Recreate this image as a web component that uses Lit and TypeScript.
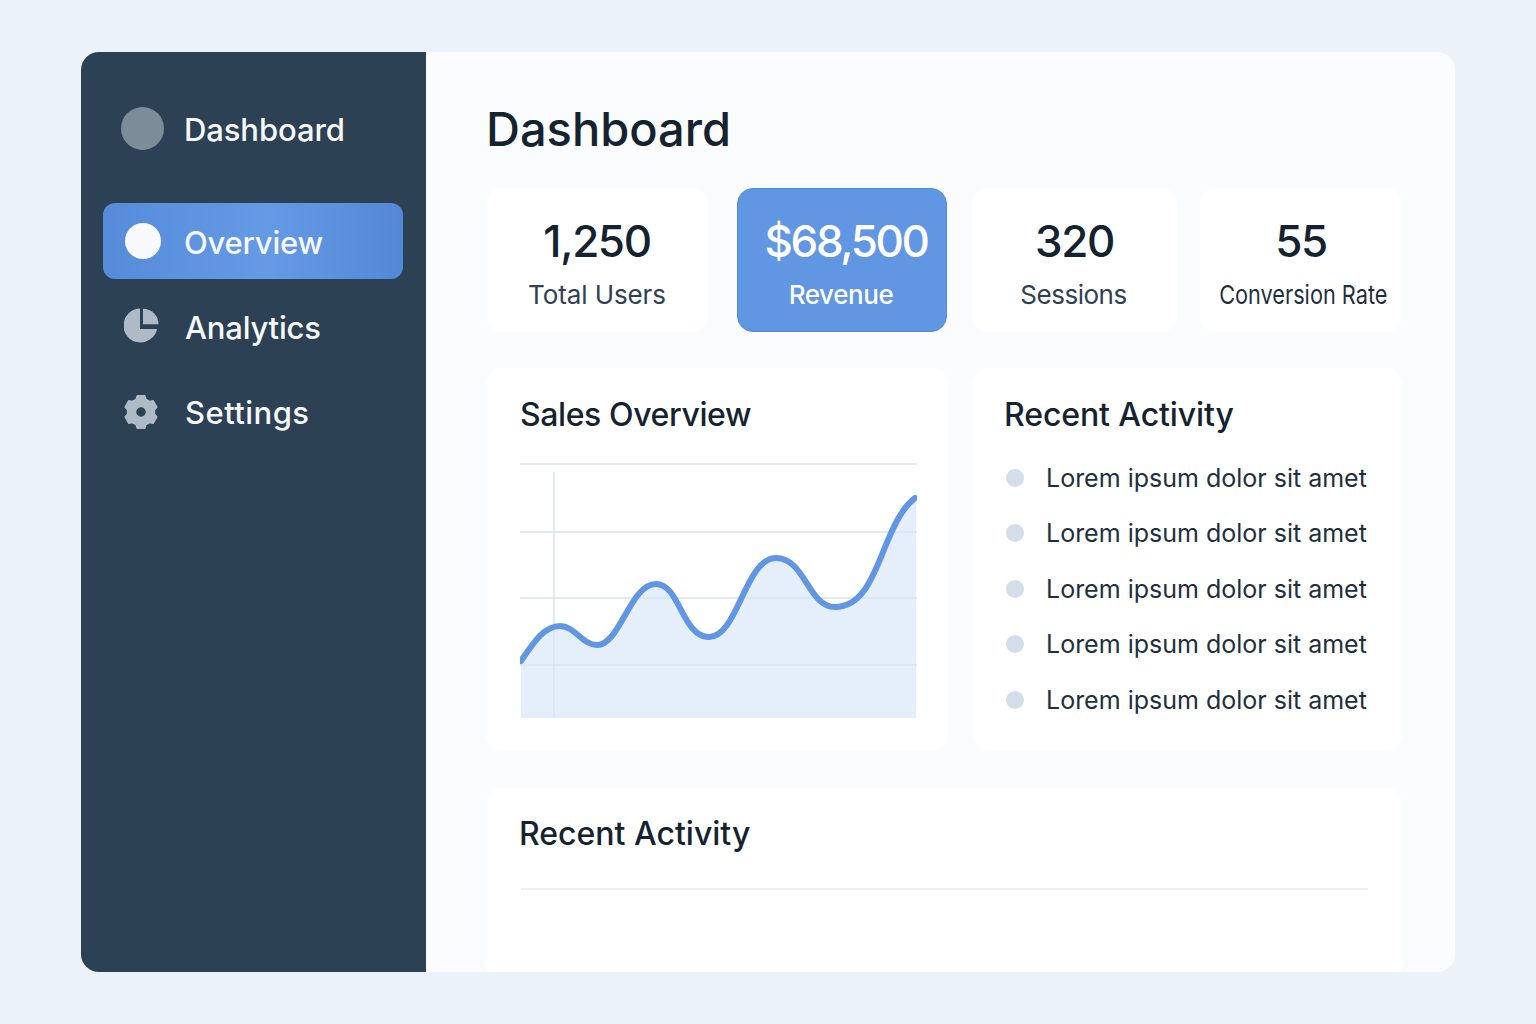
import { LitElement, html, css, svg } from "lit";
import { customElement } from "lit/decorators.js";

const stats = [
  { value: "1,250", label: "Total Users", cls: "a" },
  { value: "$68,500", label: "Revenue", cls: "b hot" },
  { value: "320", label: "Sessions", cls: "c" },
  { value: "55", label: "Conversion Rate", cls: "d" },
];

const curve =
  "M1 201 C15 180 25 166 40 166 C55 166 62 185 77 185 C100 185 110 124 136 124 C160 124 162 177 189 177 C218 177 225 98 256 98 C285 98 288 147 315 147 C360 147 360 65 395 38";

function gearPath(cx: number, cy: number, teeth: number, outer: number, root: number): string {
  const pts: string[] = [];
  const pt = (r: number, deg: number) => {
    const a = (deg * Math.PI) / 180;
    return `${(cx + r * Math.cos(a)).toFixed(2)} ${(cy + r * Math.sin(a)).toFixed(2)}`;
  };
  const step = 360 / teeth;
  for (let i = 0; i < teeth; i++) {
    const c = -90 + i * step;
    pts.push(pt(root, c - 21), pt(outer, c - 13), pt(outer, c + 13), pt(root, c + 21));
  }
  return `M${pts.join(" L")} Z`;
}

const gear = gearPath(17, 18, 6, 16.6, 13.6);

@customElement("app-root")
export class AppRoot extends LitElement {
  static styles = css`
    :host {
      display: block;
      width: 1536px;
      height: 1024px;
      box-sizing: border-box;
      padding: 52px 81px;
      background: #ebf2fa;
      font-family: Inter, "Liberation Sans", sans-serif;
      color: #14232f;
    }
    .shell {
      display: flex;
      height: 920px;
      border-radius: 18px;
      overflow: hidden;
      background: #fbfcfe;
    }
    .side {
      width: 345px;
      flex: none;
      box-sizing: border-box;
      padding: 55px 22px 0;
      background: #2c4154;
      color: #fff;
    }
    .brand {
      display: flex;
      align-items: center;
      gap: 20px;
      padding-left: 18px;
      height: 43px;
      font-size: 31px;
      font-weight: 500;
      letter-spacing: -0.1px;
      color: #f6f8fb;
    }
    .brand span {
      padding-top: 2px;
    }
    .brand i {
      width: 43px;
      height: 43px;
      border-radius: 50%;
      background: #7d8c99;
    }
    nav {
      display: flex;
      flex-direction: column;
      margin-top: 53px;
      gap: 9.25px;
    }
    .item {
      display: flex;
      align-items: center;
      width: 300px;
      height: 76px;
      box-sizing: border-box;
      padding-left: 21px;
      gap: 24px;
      border-radius: 12px;
      font-size: 31px;
      font-weight: 500;
      letter-spacing: -0.2px;
      color: #f6f8fb;
    }
    .item span {
      padding-top: 2px;
    }
    .item svg {
      width: 36px;
      height: 36px;
      flex: none;
      margin-right: 1px;
    }
    .item.settings {
      letter-spacing: 0.45px;
    }
    .item.on {
      padding-left: 22px;
      gap: 23px;
      background: linear-gradient(90deg, #558bd9 0%, #659ae5 55%, #5288d6 100%);
    }
    .item.on i {
      width: 36px;
      height: 36px;
      flex: none;
      border-radius: 50%;
      background: #f7f9fc;
    }
    main {
      flex: 1;
      min-width: 0;
      box-sizing: border-box;
      padding: 50px 53px 0 60px;
      display: flex;
      flex-direction: column;
    }
    h1 {
      margin: 0;
      font-size: 47px;
      line-height: 54px;
      font-weight: 500;
      color: #14232f;
    }
    .stats {
      display: flex;
      margin-top: 32px;
    }
    .stat {
      height: 144px;
      flex: none;
      box-sizing: border-box;
      padding-top: 26px;
      background: #fff;
      border-radius: 16px;
      text-align: center;
    }
    .stat.a {
      width: 222px;
    }
    .stat.b {
      width: 210px;
      margin-left: 29px;
    }
    .stat.c {
      width: 205px;
      margin-left: 25px;
    }
    .stat.d {
      width: 202px;
      margin-left: 23px;
    }
    .stat b {
      display: block;
      font-size: 44px;
      line-height: 54px;
      font-weight: 500;
      letter-spacing: -1.4px;
    }
    .stat span {
      display: block;
      margin-top: 11px;
      font-size: 26px;
      line-height: 32px;
      color: #2e4152;
    }
    .stat.a span {
      letter-spacing: -0.1px;
    }
    .stat.c span {
      letter-spacing: -0.5px;
      padding-right: 2px;
    }
    .stat.d span {
      color: #1e2f3e;
      white-space: nowrap;
      padding-left: 3px;
      transform: scaleX(0.835);
    }
    .stat.hot {
      background: #6096e2;
      color: #fff;
      border: 1px solid #528ad9;
      padding-top: 25px;
    }
    .stat.hot b {
      letter-spacing: -2.4px;
      padding-left: 8px;
    }
    .stat.hot span {
      color: #fff;
      font-weight: 500;
      letter-spacing: -0.4px;
      padding-right: 2px;
    }
    .row {
      display: grid;
      grid-template-columns: 462px 429px;
      justify-content: space-between;
      margin-top: 36px;
    }
    .card {
      background: #fff;
      border-radius: 16px;
      height: 382px;
      box-sizing: border-box;
    }
    .sales {
      padding: 27px 0 0 34px;
    }
    .sales h2 {
      letter-spacing: -0.4px;
    }
    h2 {
      margin: 0;
      font-size: 32px;
      line-height: 40px;
      font-weight: 500;
      color: #14232f;
    }
    .chart {
      display: block;
      width: 397px;
      height: 260px;
      margin-top: 25px;
    }
    .recent {
      padding: 27px 0 0 31px;
    }
    .recent h2 {
      letter-spacing: -0.1px;
    }
    ul {
      list-style: none;
      margin: 26.7px 0 0;
      padding: 0;
      display: flex;
      flex-direction: column;
      gap: 23.5px;
    }
    li {
      display: flex;
      align-items: center;
      gap: 22px;
      font-size: 25px;
      line-height: 32px;
      color: #1e2f3e;
    }
    li i {
      width: 18px;
      height: 18px;
      margin-left: 2px;
      border-radius: 50%;
      background: #d3dee8;
    }
    .bottom {
      flex: 1;
      margin-top: 38px;
      padding: 26px 34px 0 33px;
      background: #fff;
      border-radius: 16px 16px 0 0;
    }
    hr {
      margin: 34px 0 0 2px;
      border: 0;
      height: 2px;
      background: #edf1f5;
    }
  `;

  render() {
    return html`
      <div class="shell">
        <aside class="side">
          <div class="brand"><i></i><span>Dashboard</span></div>
          <nav>
            <div class="item on"><i></i><span>Overview</span></div>
            <div class="item">
              <svg viewBox="0 0 36 36"><path fill="#aebbc6" d="M16 0.500 V21 H33.100 A17 17 0 1 1 16 0.500 Z"/><path fill="#aebbc6" d="M19 0.800 A15.500 15.500 0 0 1 34.500 16.300 H19 Z"/></svg>
              <span>Analytics</span>
            </div>
            <div class="item settings">
              <svg viewBox="0 0 36 36"><path fill="#aebbc6" stroke="#aebbc6" stroke-width="1.500" stroke-linejoin="round" fill-rule="evenodd" d="${gear} M17 12.500 a5.500 5.500 0 1 0 0 11 a5.500 5.500 0 1 0 0 -11 Z"/></svg>
              <span>Settings</span>
            </div>
          </nav>
        </aside>
        <main>
          <h1>Dashboard</h1>
          <section class="stats">
            ${stats.map(
              (s) => html`<div class="stat ${s.cls}"><b>${s.value}</b><span>${s.label}</span></div>`
            )}
          </section>
          <section class="row">
            <div class="card sales">
              <h2>Sales Overview</h2>
              <svg class="chart" viewBox="0 0 397 260">
                ${[4, 72, 138, 205].map(
                  (y) => svg`<line x1="0" x2="397" y1=${y} y2=${y} stroke="#d8e2ed" stroke-width="1.500"/>`
                )}
                <line x1="34" x2="34" y1="12" y2="258" stroke="#dbe3ec" stroke-width="1.500"/>
                <path d="${curve} L396 38 V258 H1 Z" fill="#d5e4f8" fill-opacity="0.62"/>
                <path d=${curve} fill="none" stroke="#6096e2" stroke-width="6" stroke-linecap="round"/>
              </svg>
            </div>
            <div class="card recent">
              <h2>Recent Activity</h2>
              <ul>
                ${[0, 1, 2, 3, 4].map(() => html`<li><i></i>Lorem ipsum dolor sit amet</li>`)}
              </ul>
            </div>
          </section>
          <section class="bottom">
            <h2>Recent Activity</h2>
            <hr />
          </section>
        </main>
      </div>
    `;
  }
}
